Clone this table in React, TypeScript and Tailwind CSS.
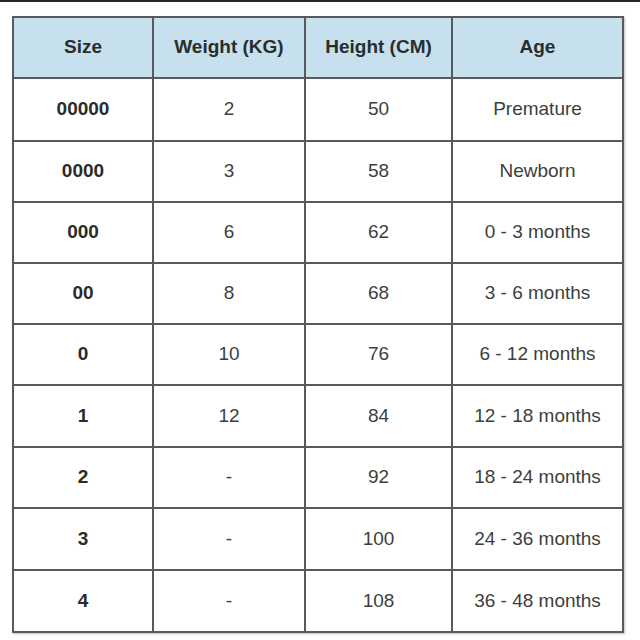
import React from "react";

const rows: [string, string, string, string][] = [
  ["00000", "2", "50", "Premature"],
  ["0000", "3", "58", "Newborn"],
  ["000", "6", "62", "0 - 3 months"],
  ["00", "8", "68", "3 - 6 months"],
  ["0", "10", "76", "6 - 12 months"],
  ["1", "12", "84", "12 - 18 months"],
  ["2", "-", "92", "18 - 24 months"],
  ["3", "-", "100", "24 - 36 months"],
  ["4", "-", "108", "36 - 48 months"],
];

export default function App() {
  const headers = ["Size", "Weight (KG)", "Height (CM)", "Age"];
  return (
    <div
      className="w-[640px] h-[640px] bg-white border-t-2 border-[#262626] overflow-hidden"
      style={{ fontFamily: '"Liberation Sans", Arial, sans-serif' }}
    >
      <div className="pl-[12px] pt-[14px]">
        <div className="grid w-[612px] grid-cols-[138px_150px_145px_169px] grid-rows-[59px_61px_59px_59px_59px_59px_60px_59px_60px_60px] gap-[2px] p-[2px] bg-[#555a5c] shadow-[1px_1px_2px_rgba(0,0,0,0.25)]">
          {headers.map((h) => (
            <div
              key={h}
              className="flex items-center justify-center bg-[#c6e1ed] text-[19px] font-bold text-[#2a2d2e]"
            >
              {h}
            </div>
          ))}
          {rows.map((r) =>
            r.map((c, i) => (
              <div
                key={r[0] + "-" + i}
                className={
                  "flex items-center justify-center bg-white text-[19px] " +
                  (i === 0 ? "font-bold text-[#2a2c2a]" : "text-[#3d3f3d]")
                }
              >
                {c}
              </div>
            ))
          )}
        </div>
      </div>
    </div>
  );
}
